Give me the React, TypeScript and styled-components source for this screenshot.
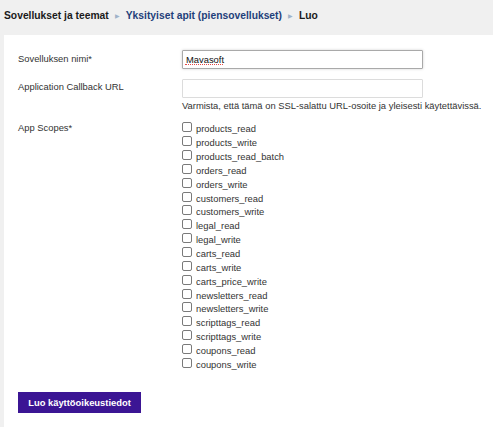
import React from "react";
import styled, { createGlobalStyle } from "styled-components";

const Global = createGlobalStyle`
  html, body { margin: 0; padding: 0; background: #f0f0f0; }
  body { font-family: "Liberation Sans", Arial, sans-serif; color: #333; }
  * { box-sizing: border-box; }
`;

const Page = styled.div`
  width: 493px;
  height: 427px;
  overflow: hidden;
  background: #f0f0f0;
  padding-left: 4px;
  display: flex;
  flex-direction: column;
`;

const Breadcrumb = styled.nav`
  height: 35px;
  display: flex;
  align-items: center;
  gap: 6px;
  padding-bottom: 5px;
  font-size: 10.3px;
  font-weight: bold;
  color: #111;
  white-space: nowrap;
`;

const Crumb = styled.span<{ $link?: boolean }>`
  color: ${(p) => (p.$link ? "#1f3f7a" : "#1a1a1a")};
`;

const Sep = styled.span`
  color: #9fb3c9;
  font-size: 6px;
  font-weight: normal;
`;

const Panel = styled.section`
  flex: 1;
  background: #fff;
  padding: 15px 0 0 14px;
  display: flex;
  flex-direction: column;
`;

const Row = styled.div<{ $mt?: number }>`
  display: grid;
  grid-template-columns: 164px 1fr;
  align-items: start;
  margin-top: ${(p) => p.$mt ?? 0}px;
  font-size: 9.4px;
`;

const Label = styled.label<{ $pt?: number }>`
  padding-top: ${(p) => p.$pt ?? 0}px;
  line-height: 12px;
  color: #333;
`;

const Field = styled.div`
  display: flex;
  flex-direction: column;
`;

const InputWrap = styled.div`
  position: relative;
  width: 241px;
`;

const SpellMark = styled.span`
  position: absolute;
  left: 3px;
  top: 14px;
  width: 38px;
  border-bottom: 1px dotted #e34a4a;
  pointer-events: none;
`;

const TextInput = styled.input<{ $focus?: boolean }>`
  display: block;
  width: 241px;
  height: 19px;
  margin: 0;
  padding: 0 3px;
  font-family: "Liberation Sans", Arial, sans-serif;
  font-size: 9.4px;
  color: #111;
  background: #fff;
  border: 1px solid ${(p) => (p.$focus ? "#a9a9a9" : "#dcdcdc")};
  border-radius: 1px;
  box-shadow: ${(p) => (p.$focus ? "0 0 3px rgba(0,0,0,0.18)" : "none")};
  outline: none;
`;

const Help = styled.div`
  margin-top: 2px;
  line-height: 12px;
  color: #333;
  white-space: nowrap;
`;

const ScopeList = styled.ul`
  list-style: none;
  margin: 0;
  padding: 0;
`;

const Scope = styled.li`
  display: flex;
  align-items: center;
  gap: 4px;
  height: 13.85px;
  color: #333;
`;

const Box = styled.span`
  width: 10px;
  height: 10px;
  border: 1px solid #7a7a7a;
  border-radius: 2px;
  background: #fff;
  flex: none;
  margin-top: -3px;
`;

const Submit = styled.button`
  align-self: flex-start;
  margin-top: 21px;
  width: 123px;
  height: 21px;
  padding: 0;
  background: #3b1594;
  color: #fff;
  border: none;
  font-family: "Liberation Sans", Arial, sans-serif;
  font-weight: bold;
  font-size: 9.4px;
  cursor: pointer;
`;

const scopes = [
  "products_read",
  "products_write",
  "products_read_batch",
  "orders_read",
  "orders_write",
  "customers_read",
  "customers_write",
  "legal_read",
  "legal_write",
  "carts_read",
  "carts_write",
  "carts_price_write",
  "newsletters_read",
  "newsletters_write",
  "scripttags_read",
  "scripttags_write",
  "coupons_read",
  "coupons_write",
];

export default function App() {
  return (
    <>
      <Global />
      <Page>
        <Breadcrumb>
          <Crumb>Sovellukset ja teemat</Crumb>
          <Sep>▶</Sep>
          <Crumb $link>Yksityiset apit (piensovellukset)</Crumb>
          <Sep>▶</Sep>
          <Crumb>Luo</Crumb>
        </Breadcrumb>
        <Panel>
          <Row>
            <Label $pt={3}>Sovelluksen nimi*</Label>
            <Field>
              <InputWrap>
                <TextInput $focus defaultValue="Mavasoft" spellCheck={false} />
                <SpellMark />
              </InputWrap>
            </Field>
          </Row>
          <Row $mt={10}>
            <Label $pt={2}>Application Callback URL</Label>
            <Field>
              <TextInput />
              <Help>Varmista, että tämä on SSL-salattu URL-osoite ja yleisesti käytettävissä.</Help>
            </Field>
          </Row>
          <Row $mt={10}>
            <Label>App Scopes*</Label>
            <ScopeList>
              {scopes.map((s) => (
                <Scope key={s}>
                  <Box />
                  <span>{s}</span>
                </Scope>
              ))}
            </ScopeList>
          </Row>
          <Submit>Luo käyttöoikeustiedot</Submit>
        </Panel>
      </Page>
    </>
  );
}
